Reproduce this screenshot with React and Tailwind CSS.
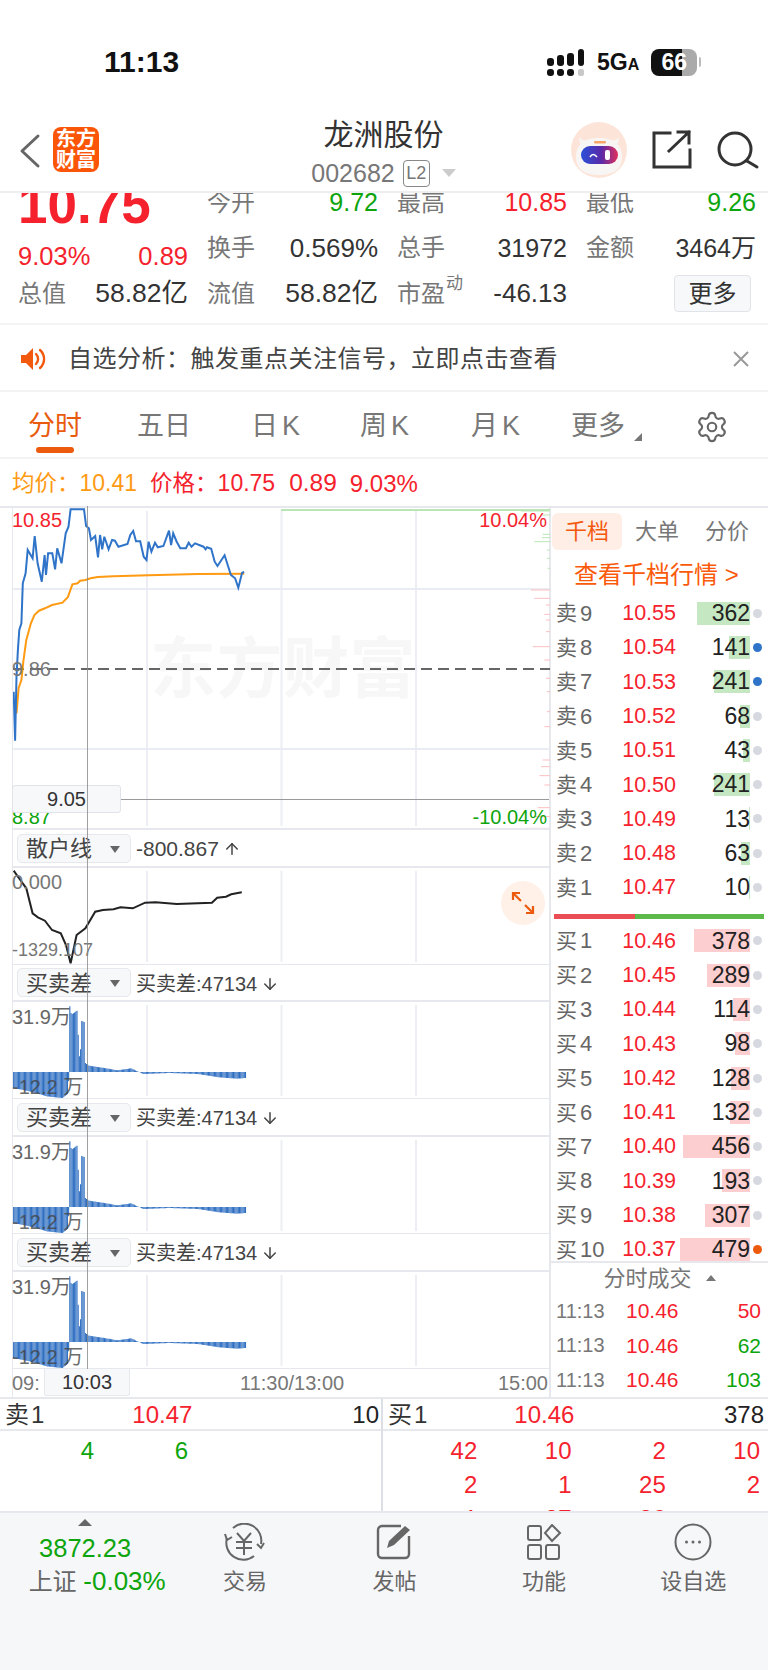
import { ArrowDown, ArrowUp, Settings } from "lucide-react";

const RED = "text-[#f5222d]";
const GREEN = "text-[#0da50d]";

// points read off the chart, in crop coordinates (x scaled 2.845, y scaled 3)
const BLUE = [[36,575],[40,722],[44,530],[48,450],[52,390],[58,370],[62,250],[70,220],[76,150],[90,175],[96,108],[104,190],[116,245],[124,165],[128,225],[134,160],[146,160],[154,208],[160,145],[172,190],[184,100],[192,80],[198,28],[236,28],[242,78],[250,85],[256,120],[268,108],[276,172],[282,105],[288,148],[294,110],[306,148],[316,120],[324,122],[334,140],[360,132],[368,105],[376,93],[384,124],[396,124],[406,170],[414,180],[420,125],[428,155],[438,128],[446,142],[462,138],[478,92],[484,135],[490,100],[500,125],[510,145],[526,145],[534,128],[542,140],[552,130],[576,140],[582,148],[586,142],[598,146],[608,185],[616,198],[636,166],[654,225],[666,235],[675,263],[686,218],[692,216]];
const ORANGE = [[44,640],[50,565],[58,540],[64,480],[72,420],[85,370],[95,345],[108,332],[125,325],[145,315],[175,308],[190,292],[203,253],[218,250],[225,242],[240,240],[255,235],[275,231],[320,229],[420,226],[560,222],[692,221]];
const BLACK = [[36,122],[55,150],[72,175],[90,250],[105,262],[125,272],[145,300],[170,310],[185,345],[198,400],[215,315],[240,295],[268,245],[290,240],[320,238],[340,232],[375,235],[410,218],[440,217],[500,222],[600,218],[615,203],[640,200],[655,193],[685,187]];
const DIFF = [[36,775],[60,780],[100,790],[130,800],[175,805],[192,790],[195,525],[200,555],[218,542],[221,680],[226,680],[228,573],[238,578],[240,700],[250,708],[300,716],[330,722],[370,716],[405,733],[480,730],[560,733],[620,743],[672,747],[695,745]];
// volume ticks on the right edge of the price chart: [y, x start]
const GREEN_TICKS = [[18,30],[30,90],[88,95],[98,92],[110,70],[135,108],[160,108],[190,110]];
const PINK_TICKS = [[255,60],[280,70],[300,105],[328,100],[345,105],[380,105],[425,65],[465,100],[493,97],[520,105],[560,108],[620,108],[665,100],[765,95],[785,90],[812,85],[840,100],[908,80],[935,70],[970,45]];

const px = (x) => x / 2.845 - 12;
const line = (pts, top) => pts.map(([x, y]) => `${px(x).toFixed(1)},${(y / 3 + top).toFixed(1)}`).join(" ");

function lerp(pts, x) {
  for (let i = 1; i < pts.length; i++) {
    if (x <= pts[i][0]) {
      const [x0, y0] = pts[i - 1];
      const [x1, y1] = pts[i];
      return y0 + ((y1 - y0) * (x - x0)) / (x1 - x0);
    }
  }
  return pts[pts.length - 1][1];
}

const SELL = [
  ["9", "10.55", "362", 53, 0], ["8", "10.54", "141", 21, 1], ["7", "10.53", "241", 36, 1],
  ["6", "10.52", "68", 10, 0], ["5", "10.51", "43", 7, 0], ["4", "10.50", "241", 36, 0],
  ["3", "10.49", "13", 1, 0], ["2", "10.48", "63", 9, 0], ["1", "10.47", "10", 1, 0],
];
const BUY = [
  ["1", "10.46", "378", 56, 0], ["2", "10.45", "289", 43, 0], ["3", "10.44", "114", 17, 0],
  ["4", "10.43", "98", 15, 0], ["5", "10.42", "128", 19, 0], ["6", "10.41", "132", 20, 0],
  ["7", "10.40", "456", 67, 0], ["8", "10.39", "193", 28, 0], ["9", "10.38", "307", 45, 0],
  ["10", "10.37", "479", 70, 2],
];

function Grid({ h }) {
  return [134, 268.5, 403].map((x) => (
    <line key={x} x1={x} x2={x} y1="3" y2={h - 2} stroke="#eceef3" strokeWidth="2" />
  ));
}

function DiffChart() {
  const bars = [];
  for (let x = 36; x < 696; x += 3.4) {
    bars.push(
      <line key={x} x1={px(x)} x2={px(x)} y1="70" y2={70 + (lerp(DIFF, x) - 727) / 3} stroke="#2f6fc2" strokeWidth="1.1" />
    );
  }
  return (
    <div className="relative h-[97px] border-b border-[#e6e8ed]">
      <svg width="537" height="96" className="block">
        <Grid h={96} />
        {bars}
      </svg>
      <span className="absolute left-[-1px] top-[3px] text-[20px] leading-[24px] text-[#666]">31.9万</span>
      <span className="absolute left-[-1px] top-[73px] text-[20px] leading-[24px] text-[#444]/80">-12.2 万</span>
    </div>
  );
}

function Dropdown({ name, h, children }) {
  return (
    <div className={`flex items-center border-b-2 border-[#e6e8ed] pl-[4px] ${h}`}>
      <div className="flex h-[29px] w-[114px] items-center justify-between rounded-[5px] border border-[#e6e8ed] bg-[#f7f8fa] pl-[8px] pr-[10px] pt-[2px] text-[22px] leading-none text-[#444]">
        {name}
        <span className="h-0 w-0 border-x-[5px] border-t-[7px] border-x-transparent border-t-[#666]" />
      </div>
      <span className="ml-[5px] flex items-center pt-[2px] text-[20px] text-[#444]">{children}</span>
    </div>
  );
}

function Level({ side, n, price, vol, bar, dot, sell }) {
  return (
    <div className="flex h-[34.3px] items-center pl-[5px]">
      <span className="flex w-[60px] items-center text-[#666]">
        <span className="text-[21px]">{side}</span>
        <span className="ml-[3px] text-[22px]">{n}</span>
      </span>
      <span className={`w-[60px] text-right text-[21.5px] ${RED}`}>{price}</span>
      <span className="relative flex h-[23px] w-[74px] items-center justify-end text-[23px] text-[#222]">
        <span className={`absolute right-0 top-0 h-full ${sell ? "bg-[#bfe6bd]/90" : "bg-[#fcc9cb]/90"}`} style={{ width: bar }} />
        <span className="relative">{vol}</span>
      </span>
      <span className={`ml-[3px] h-[9px] w-[9px] rounded-full ${dot === 1 ? "bg-[#2f74c8]" : dot === 2 ? "bg-[#ec5a0d]" : "bg-[#d6d9e0]"}`} />
    </div>
  );
}

function Stat({ label, value, color = "text-[#333]", size = "text-[25px]", extra }) {
  return (
    <div className="flex items-center justify-between">
      <span className="relative text-[24px] text-[#777]">
        {label}
        {extra && <span className="absolute left-[49px] top-[-4px] text-[17px] leading-[24px] text-[#777]">{extra}</span>}
      </span>
      <span className={`${size} ${color}`}>{value}</span>
    </div>
  );
}

function NavItem({ label, children }) {
  return (
    <div className="flex w-[150px] flex-col items-center">
      <div className="flex h-[46px] items-center">{children}</div>
      <span className="mt-[2px] text-[22px] leading-[30px] text-[#666]">{label}</span>
    </div>
  );
}

export default function App() {
  return (
    <div className="relative h-[1670px] w-[768px] overflow-hidden bg-white [font-family:'Liberation_Sans','Noto_Sans_CJK_SC',sans-serif]">
      {/* status bar */}
      <div className="flex h-[98px] items-start pt-[40px]">
        <span className="ml-[104px] w-[74px] whitespace-nowrap text-[30px] font-bold leading-[44px] text-[#111]">11:13</span>
        <svg width="38" height="30" className="ml-[369px] mt-[8px]">
          <g fill="#111">
            <rect x="0" y="10" width="7" height="8" rx="3" /><rect x="0" y="21" width="7" height="7" rx="3" />
            <rect x="10" y="7" width="7" height="11" rx="3" /><rect x="10" y="21" width="7" height="7" rx="3" />
            <rect x="20" y="5" width="7" height="13" rx="3" /><rect x="20" y="21" width="7" height="7" rx="3" />
            <rect x="31" y="1" width="6" height="17" rx="3" />
          </g>
          <rect x="31" y="21" width="6" height="7" rx="2" fill="#c8c8c8" />
        </svg>
        <span className="ml-[12px] mt-[3px] flex items-baseline font-bold leading-[38px] text-[#111]">
          <span className="text-[23px]">5G</span><span className="text-[16px]">A</span>
        </span>
        <div className="ml-[12px] mt-[9px] flex h-[27px] w-[46px] items-center justify-center rounded-[8px] bg-[linear-gradient(90deg,#111_67%,#aaa_67%)] text-[23px] font-bold text-white">66</div>
        <span className="ml-[2px] mt-[17px] h-[10px] w-[2px] rounded-r bg-[#bbb]" />
      </div>

      {/* header */}
      <div className="relative flex h-[95px] items-start border-b-2 border-[#eeeeee]">
        <svg width="24" height="36" className="ml-[18px] mt-[35px]" fill="none" stroke="#666" strokeWidth="3" strokeLinecap="round" strokeLinejoin="round">
          <path d="M20 3 L4 18 L20 33" />
        </svg>
        <div className="ml-[11px] mt-[29px] flex h-[45px] w-[46px] flex-col items-center justify-center rounded-[8px] bg-[#fb5608] text-[20px] font-bold leading-[21px] text-white">
          <span>东方</span><span>财富</span>
        </div>
        <div className="flex w-[471px] flex-col items-center pl-[98px] pt-[18px]">
          <span className="text-[30px] leading-[38px] text-[#333]">龙洲股份</span>
          <div className="mt-[5px] flex items-center">
            <span className="text-[25px] leading-[28px] text-[#777]">002682</span>
            <span className="ml-[8px] flex h-[27px] w-[27px] items-center justify-center rounded-[4px] border border-[#888] text-[18px] leading-none text-[#777]">L2</span>
            <span className="ml-[12px] h-0 w-0 border-x-[7px] border-t-[8px] border-x-transparent border-t-[#ccc]" />
          </div>
        </div>
        <svg width="58" height="58" viewBox="0 0 58 58" className="mt-[23px]">
          <defs>
            <linearGradient id="visor" x1="0" x2="1" y1="0" y2="0">
              <stop offset="0" stopColor="#2850d8" />
              <stop offset="0.55" stopColor="#5a2aa8" />
              <stop offset="1" stopColor="#e0305c" />
            </linearGradient>
          </defs>
          <circle cx="29" cy="29" r="28" fill="#fde4d8" />
          <path d="M9 16 Q9 24 15 26 L19 20 Q12 20 9 16 Z M49 16 Q49 24 43 26 L39 20 Q46 20 49 16 Z" fill="#f8f6f4" />
          <path d="M6 36 C6 22 16 17 29 17 C42 17 52 22 52 36 C52 49 42 54 29 54 C16 54 6 49 6 36 Z" fill="#f8f6f4" />
          <rect x="11" y="25" width="37" height="18" rx="9" fill="url(#visor)" />
          <path d="M20 36 Q23 31 27 36" stroke="#fff" strokeWidth="1.6" fill="none" />
          <rect x="35" y="29" width="5" height="10" rx="2" fill="#fff" />
          <rect x="24" y="20" width="12" height="2.5" rx="1.2" fill="#f5a66a" />
        </svg>
        <svg width="40" height="40" className="ml-[24px] mt-[32px]" fill="none" stroke="#333" strokeWidth="3" strokeLinecap="square">
          <path d="M18 3 H2 V37 H38 V20" />
          <path d="M17 21 L37 2 M26 2 H37 V13" />
        </svg>
        <svg width="44" height="44" className="ml-[25px] mt-[31px]" fill="none" stroke="#333" strokeWidth="3" strokeLinecap="round">
          <circle cx="18" cy="20" r="16" />
          <path d="M30 32 L40 38" />
        </svg>
      </div>

      {/* quote stats */}
      <div className="h-[132px] overflow-hidden border-b-2 border-[#f5f5f5]">
        <div className="ml-[18px] mt-[-13px] grid w-[738px] grid-cols-[170px_171px_170px_170px] grid-rows-[45.5px_45.5px_45.5px] items-center gap-x-[19px]">
          <span className={`mt-[4px] text-[53px] font-bold leading-[45px] ${RED}`}>10.75</span>
          <Stat label="今开" value="9.72" color={GREEN} />
          <Stat label="最高" value="10.85" color={RED} />
          <Stat label="最低" value="9.26" color={GREEN} />
          <div className={`mt-[15px] flex justify-between text-[25.5px] ${RED}`}><span>9.03%</span><span>0.89</span></div>
          <Stat label="换手" value="0.569%" size="text-[26px]" />
          <Stat label="总手" value="31972" />
          <Stat label="金额" value="3464万" />
          <Stat label="总值" value="58.82亿" size="text-[26.5px]" />
          <Stat label="流值" value="58.82亿" size="text-[26.5px]" />
          <Stat label="市盈" extra="动" value="-46.13" size="text-[26px]" />
          <div className="flex justify-end pr-[5px]">
            <span className="flex h-[37px] w-[77px] items-center justify-center rounded-[4px] border border-[#e0e3e8] bg-[#f7f8fa] text-[24px] text-[#333]">更多</span>
          </div>
        </div>
      </div>

      {/* notice */}
      <div className="flex h-[67px] items-center border-b-2 border-[#f3f3f3] pl-[21px] pt-[3px]">
        <svg width="26" height="24" viewBox="0 0 26 24" fill="#f2590c">
          <path d="M0 8 H5 L12 1 V23 L5 16 H0 Z" />
          <path d="M15 7 a7 7 0 0 1 0 10 M19 3 a12 12 0 0 1 0 18" fill="none" stroke="#f2590c" strokeWidth="2.4" strokeLinecap="round" />
        </svg>
        <span className="ml-[21px] w-[665px] text-[24px] leading-none tracking-[0.5px] text-[#444]">自选分析：触发重点关注信号，立即点击查看</span>
        <svg width="16" height="16" fill="none" stroke="#999" strokeWidth="2"><path d="M1 1 L15 15 M15 1 L1 15" /></svg>
      </div>

      {/* period tabs */}
      <div className="relative flex h-[67px] items-center border-b-2 border-[#f3f3f3] pt-[4px] text-[27px] text-[#777]">
        <span className="ml-[28px] text-[#e95b0c]">分时</span>
        <span className="ml-[55px]">五日</span>
        <span className="ml-[60px]">日<span className="ml-[4px]">K</span></span>
        <span className="ml-[60px]">周<span className="ml-[4px]">K</span></span>
        <span className="ml-[62px]">月<span className="ml-[4px]">K</span></span>
        <span className="ml-[51px]">更多</span>
        <span className="ml-[9px] mt-[20px] h-0 w-0 border-b-[8px] border-l-[8px] border-b-[#777] border-l-transparent" />
        <Settings size={34} strokeWidth={1.5} color="#666" className="ml-[53px]" />
        <span className="absolute bottom-[4px] left-[36px] h-[6px] w-[38px] rounded-full bg-[#ec5a0d]" />
      </div>

      {/* average / price legend */}
      <div className="flex h-[47px] items-center pl-[12px] pt-[2px] text-[22.5px]">
        <span className="text-[#ff9a13]">均价：</span>
        <span className="text-[23px] text-[#ff9a13]">10.41</span>
        <span className={`ml-[13px] ${RED}`}>价格：</span>
        <span className={`text-[23px] ${RED}`}>10.75</span>
        <span className={`ml-[14px] text-[24.5px] ${RED}`}>0.89</span>
        <span className={`ml-[13px] text-[24px] ${RED}`}>9.03%</span>
      </div>

      {/* charts + order book */}
      <div className="flex h-[893px] border-y-2 border-[#e6e8ed]">
        <div className="relative ml-[12px] w-[537px] border-l border-[#e6e8ed]">
          {/* price chart */}
          <div className="relative h-[322px] border-b-2 border-[#e6e8ed]">
            <svg width="537" height="320" className="block">
              <line x1="268" x2="537" y1="2" y2="2" stroke="#b9e6b4" strokeWidth="2" />
              <Grid h={320} />
              <line x1="0" x2="537" y1="81" y2="81" stroke="#e9ecf2" strokeWidth="2" />
              <line x1="0" x2="537" y1="241" y2="241" stroke="#e9ecf2" strokeWidth="2" />
              {GREEN_TICKS.map(([y, x]) => <line key={y} x1={498 + x / 3} x2="537" y1={y / 3 - 3} y2={y / 3 - 3} stroke="#b9e6b4" />)}
              {PINK_TICKS.map(([y, x]) => <line key={y} x1={498 + x / 3} x2="537" y1={y / 3 - 3} y2={y / 3 - 3} stroke="#fcbfc2" />)}
            </svg>
            <span className="absolute left-[137px] top-[124px] text-[66px] font-bold leading-[75px] tracking-[0.5px] text-[#f7f7f7]">东方财富</span>
            <svg width="537" height="320" className="absolute left-0 top-0">
              <line x1="0" x2="537" y1="161" y2="161" stroke="#666" strokeWidth="2" strokeDasharray="11 6" />
              <polyline points={line(ORANGE, -8)} fill="none" stroke="#ff9a13" strokeWidth="2" />
              <polyline points={line(BLUE, -8)} fill="none" stroke="#2f74c8" strokeWidth="2" />
            </svg>
            <span className={`absolute left-[-1px] top-0 text-[20px] leading-[24px] ${RED}`}>10.85</span>
            <span className={`absolute right-[2px] top-0 text-[20px] leading-[24px] ${RED}`}>10.04%</span>
            <span className="absolute left-[-1px] top-[149px] text-[20px] leading-[24px] text-[#777]">9.86</span>
            <span className={`absolute left-[-1px] top-[297px] text-[20px] leading-[24px] ${GREEN}`}>8.87</span>
            <span className={`absolute right-[2px] top-[297px] text-[20px] leading-[24px] ${GREEN}`}>-10.04%</span>
            {/* crosshair price */}
            <span className="absolute left-[108px] right-0 top-[291px] h-px bg-[#999]" />
            <span className="absolute left-[-1px] top-[277px] flex h-[28px] w-[109px] items-center justify-center rounded-[3px] border border-[#e0e3e8] bg-[#f7f8fa] text-[20px] text-[#333]">9.05</span>
          </div>

          <Dropdown name="散户线" h="h-[38px]"><span className="text-[21px]">-800.867</span><ArrowUp size={18} strokeWidth={2} className="ml-[4px]" /></Dropdown>
          <div className="relative h-[97px] border-b border-[#e6e8ed]">
            <svg width="537" height="96" className="block">
              <Grid h={96} />
              <polyline points={line(BLACK, -38)} fill="none" stroke="#222" strokeWidth="2" />
            </svg>
            <span className="absolute left-[-1px] top-[2px] text-[20px] leading-[24px] text-[#777]">0.000</span>
            <span className="absolute left-[-1px] top-[70px] text-[18px] leading-[24px] text-[#777]">-1329.107</span>
            <div className="absolute left-[488px] top-[13px] flex h-[44px] w-[44px] items-center justify-center rounded-full bg-[#fff0e8]">
              <svg width="24" height="24" fill="none" stroke="#ec5a0d" strokeWidth="2.2">
                <path d="M2 9 V2 H9 M2 2 L10 10 M22 15 V22 H15 M22 22 L14 14" />
              </svg>
            </div>
          </div>

          <Dropdown name="买卖差" h="h-[37px]">买卖差:47134<ArrowDown size={18} strokeWidth={2} className="ml-[4px]" /></Dropdown>
          <DiffChart />
          <Dropdown name="买卖差" h="h-[38px]">买卖差:47134<ArrowDown size={18} strokeWidth={2} className="ml-[4px]" /></Dropdown>
          <DiffChart />
          <Dropdown name="买卖差" h="h-[38px]">买卖差:47134<ArrowDown size={18} strokeWidth={2} className="ml-[4px]" /></Dropdown>
          <DiffChart />

          {/* time axis */}
          <div className="relative flex h-[28px] items-center justify-between pr-[1px] text-[20px] text-[#777]">
            <span className="ml-[-1px]">09:</span>
            <span className="absolute left-[227px]">11:30/13:00</span>
            <span>15:00</span>
            <span className="absolute left-[31px] top-0 flex h-[27px] w-[86px] items-center justify-center rounded-b-[3px] border border-t-0 border-[#e6e8ed] bg-[#f7f8fa] text-[#333]">10:03</span>
          </div>

          {/* crosshair time */}
          <span className="absolute bottom-[28px] left-[74px] top-[-2px] w-px bg-[#888]/80" />
        </div>

        {/* order book */}
        <div className="w-[219px] border-l-2 border-[#e6e8ed]">
          <div className="flex h-[43px] items-center pl-[1px] pt-[4px] text-[22px] text-[#777]">
            <span className="flex h-[37px] w-[70px] items-center justify-center rounded-[6px] bg-[#ffeee6] text-[#f2590c]">千档</span>
            <span className="w-[70px] text-center">大单</span>
            <span className="w-[70px] text-center">分价</span>
          </div>
          <div className="flex h-[45px] items-center pl-[23px] pt-[3px] text-[24px] text-[#fa5a0a]">查看千档行情 &gt;</div>
          {SELL.map(([n, p, v, b, d]) => (
            <Level key={n} side="卖" n={n} price={p} vol={v} bar={b} dot={d} sell />
          ))}
          <div className="ml-[3px] mt-[9px] flex h-[5px] w-[210px]">
            <span className="w-[81px] bg-[#eb4d55]" />
            <span className="flex-1 bg-[#5cb94a]" />
          </div>
          <div className="mt-[5px] h-[339px] overflow-hidden border-b-2 border-[#e6e8ed]">
            {BUY.map(([n, p, v, b, d]) => (
              <Level key={n} side="买" n={n} price={p} vol={v} bar={b} dot={d} />
            ))}
          </div>
          <div className="flex h-[31px] items-center justify-center text-[22px] text-[#777]">
            分时成交
            <span className="ml-[14px] h-0 w-0 border-x-[5px] border-b-[6px] border-x-transparent border-b-[#777]" />
          </div>
          {[["50", "text-[#f5222d]"], ["62", "text-[#0da50d]"], ["103", "text-[#0da50d]"]].map(([v, c]) => (
            <div key={v} className="flex h-[34.5px] items-center pl-[5px] pr-[7px]">
              <span className="w-[70px] text-[20px] text-[#777]">11:13</span>
              <span className={`w-[60px] text-[21px] ${RED}`}>10.46</span>
              <span className={`flex-1 text-right text-[21px] ${c}`}>{v}</span>
            </div>
          ))}
        </div>
      </div>

      {/* bottom level-1 strip */}
      <div className="flex h-[112px] overflow-hidden text-[24px]">
        <div className="w-[383px] border-r-2 border-[#dcdfe5]">
          <div className="flex h-[32px] items-center border-b-2 border-[#e6e8ed] pl-[5px] pr-[2px] pt-[2px] leading-none">
            <span className="text-[#333]">卖<span className="ml-[2px]">1</span></span>
            <span className={`ml-[88px] ${RED}`}>10.47</span>
            <span className="ml-auto text-[#222]">10</span>
          </div>
          <div className={`grid w-[376px] grid-cols-4 pt-[3px] text-right leading-[34px] ${GREEN}`}>
            <span>4</span><span>6</span>
          </div>
        </div>
        <div className="flex-1">
          <div className="flex h-[32px] items-center border-b-2 border-[#e6e8ed] pl-[5px] pr-[4px] pt-[2px] leading-none">
            <span className="text-[#333]">买<span className="ml-[2px]">1</span></span>
            <span className={`ml-[87px] ${RED}`}>10.46</span>
            <span className="ml-auto text-[#222]">378</span>
          </div>
          <div className={`grid w-[377px] grid-cols-4 pt-[3px] text-right leading-[34px] ${RED}`}>
            <span>42</span><span>10</span><span>2</span><span>10</span>
            <span>2</span><span>1</span><span>25</span><span>2</span>
            <span>1</span><span>27</span><span>26</span>
          </div>
        </div>
      </div>

      {/* bottom nav */}
      <div className="flex h-[159px] items-start border-t-2 border-[#e6e8ed] bg-[#f6f7f9] pt-[6px]">
        <div className="flex w-[171px] flex-col items-center">
          <span className="h-0 w-0 border-x-[7px] border-b-[7px] border-x-transparent border-b-[#666]" />
          <span className={`mt-[5px] text-[25.5px] leading-[34px] ${GREEN}`}>3872.23</span>
          <span className="ml-[24px] mt-[-1px] whitespace-nowrap text-[24px] leading-[34px] text-[#666]">上证 <span className={`text-[26px] ${GREEN}`}>-0.03%</span></span>
        </div>
        <NavItem label="交易">
          <svg width="44" height="38" viewBox="0 0 44 38" fill="none" stroke="#666" strokeWidth="2">
            <path d="M10 5 A17 17 0 0 1 38 21" />
            <path d="M34 21 L38 25 L41 20" />
            <path d="M31 33 A17 17 0 0 1 4 15" />
            <path d="M2 11 L4 17 L9 14" />
            <path d="M14 10 L21 18 L28 10 M13 19 H29 M13 25 H29 M21 18 V32" />
          </svg>
        </NavItem>
        <NavItem label="发帖">
          <svg width="36" height="36" viewBox="0 0 36 36" fill="none" stroke="#666" strokeWidth="2.4" strokeLinejoin="round">
            <path d="M25 2 H6 A4 4 0 0 0 2 6 V30 A4 4 0 0 0 6 34 H29 A4 4 0 0 0 33 30 V12" />
            <path d="M11 24 L13 17 L29 2 L34 6 L18 21 Z" fill="#666" stroke="none" />
          </svg>
        </NavItem>
        <NavItem label="功能">
          <svg width="36" height="36" viewBox="0 0 36 36" fill="none" stroke="#666" strokeWidth="2">
            <rect x="2" y="2" width="13" height="14" rx="2" />
            <rect x="2" y="21" width="13" height="14" rx="2" />
            <rect x="20" y="21" width="13" height="14" rx="2" />
            <path d="M26 1 L34 9 L26 17 L19 9 Z" />
          </svg>
        </NavItem>
        <NavItem label="设自选">
          <svg width="38" height="38" viewBox="0 0 38 38" fill="none" stroke="#666" strokeWidth="2">
            <circle cx="19" cy="19" r="17.5" />
            <circle cx="12.5" cy="19" r="1.5" fill="#666" stroke="none" />
            <circle cx="19" cy="19" r="1.5" fill="#666" stroke="none" />
            <circle cx="25.5" cy="19" r="1.5" fill="#666" stroke="none" />
          </svg>
        </NavItem>
      </div>
    </div>
  );
}
